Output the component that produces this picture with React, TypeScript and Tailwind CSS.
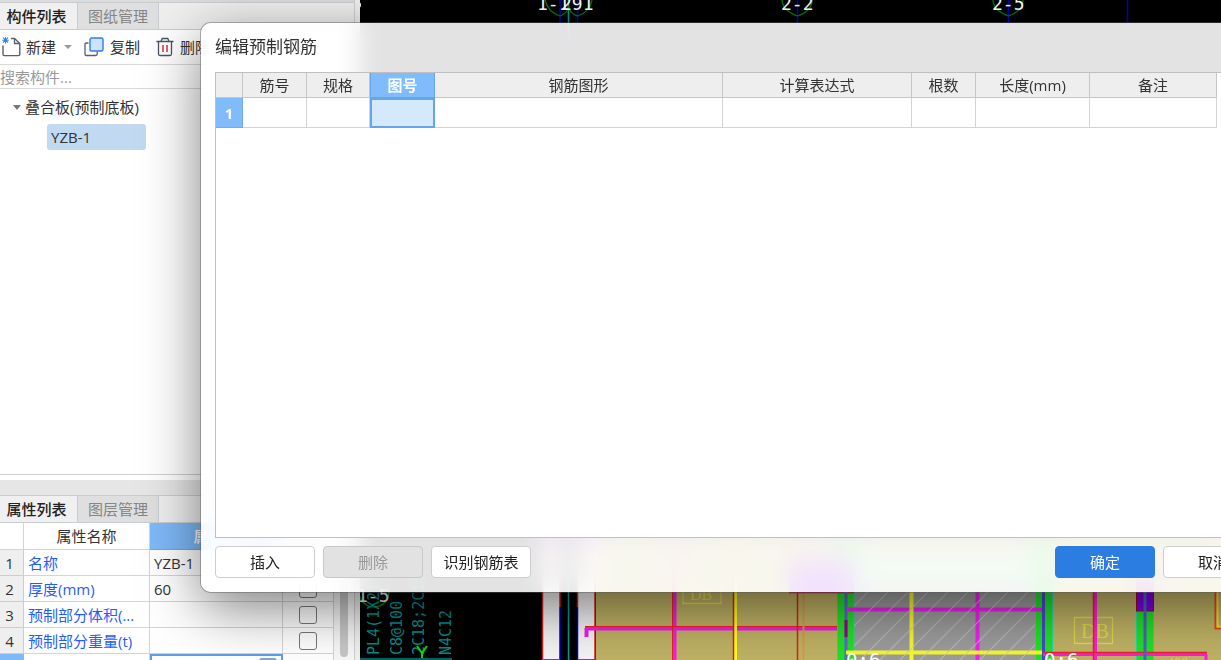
import React from "react";

const columns = [
  { label: "筋号", width: 64 },
  { label: "规格", width: 63 },
  { label: "图号", width: 65, active: true },
  { label: "钢筋图形", width: 288 },
  { label: "计算表达式", width: 189 },
  { label: "根数", width: 64 },
  { label: "长度(mm)", width: 114 },
  { label: "备注", width: 127 },
];

const properties = [
  { name: "名称", value: "YZB-1" },
  { name: "厚度(mm)", value: "60", check: true },
  { name: "预制部分体积(...", value: "", check: true },
  { name: "预制部分重量(t)", value: "", check: true },
];

function NewIcon() {
  return (
    <svg width="20" height="20" viewBox="0 0 20 20" fill="none" aria-hidden="true">
      <path d="M1 8.500v8.800a1.300 1.300 0 0 0 1.300 1.300h14.200a1.300 1.300 0 0 0 1.300-1.300V6.500L12.500 1.500H9" stroke="#565f6e" strokeWidth="1.400" />
      <path d="M12.500 1.500v5h5.300" stroke="#565f6e" strokeWidth="1.300" />
      <path d="M3.500 0v6.400M0.300 3.200h6.400M1 0.700l5 5M6 0.700L1 5.700" stroke="#2f86ea" strokeWidth="1.100" />
    </svg>
  );
}

function CopyIcon() {
  return (
    <svg width="20" height="20" viewBox="0 0 20 20" fill="none" aria-hidden="true">
      <path d="M4.500 6H2.200Q1 6 1 7.200v10Q1 18.500 2.200 18.500h9.600Q13.200 18.500 13.200 17v-2.500" stroke="#565f6e" strokeWidth="1.300" />
      <rect x="6" y="1" width="13" height="13" rx="1.500" fill="#cfe2fb" stroke="#2f7fe6" strokeWidth="1.400" />
    </svg>
  );
}

function TrashIcon() {
  return (
    <svg width="18" height="20" viewBox="0 0 18 20" fill="none" aria-hidden="true">
      <path d="M0.500 4.500h17M5 4.500L6.200 1.500h5.600L13 4.500M2.500 4.500V17q0 1.500 1.500 1.500h10q1.500 0 1.500-1.500V4.500" stroke="#4b5361" strokeWidth="1.300" />
      <path d="M7 8v7M11 8v7" stroke="#d9303e" strokeWidth="1.500" />
    </svg>
  );
}

function Tabs({ active, other }: { active: string; other: string }) {
  return (
    <div role="tablist" className="flex h-7 shrink-0 border-y border-[#c9cdd1] bg-[#efefef] text-[15px] leading-6">
      <button role="tab" aria-selected="true" className="w-[78px] border-r border-[#c9cdd1] bg-[#f0f0f0] pr-1 font-medium text-[#222]">
        {active}
      </button>
      <button role="tab" aria-selected="false" className="w-[81px] border-r border-[#c9cdd1] bg-[#dfdfdf] text-[#858585]">
        {other}
      </button>
    </div>
  );
}

function ComponentPanel() {
  return (
    <section className="flex min-h-0 flex-1 flex-col border-b border-[#cfcfcf] bg-white">
      <div className="h-0.5 shrink-0 bg-[#dcdcdc]" />
      <Tabs active="构件列表" other="图纸管理" />
      <div className="flex h-[35px] shrink-0 items-center border-b border-[#d9d9d9] pl-0.5">
        <button className="flex items-center gap-1 whitespace-nowrap">
          <NewIcon />新建
        </button>
        <button aria-label="新建选项" className="ml-2 border-x-4 border-t-4 border-x-transparent border-t-[#999]" />
        <button className="ml-3 flex items-center gap-1.5 whitespace-nowrap">
          <CopyIcon />复制
        </button>
        <button className="ml-4 flex items-center gap-1.5 whitespace-nowrap">
          <TrashIcon />删除
        </button>
      </div>
      <input
        aria-label="搜索构件"
        placeholder="搜索构件..."
        className="h-6 w-full shrink-0 border-b border-[#d9d9d9] bg-white text-[15px] outline-none placeholder:text-[#999]"
      />
      <ul className="flex flex-col gap-[3px] pt-1">
        <li className="flex h-7 items-center gap-1 pl-[13px]">
          <span className="border-x-4 border-t-[5px] border-x-transparent border-t-[#777]" />
          叠合板(预制底板)
        </li>
        <li className="ml-[47px] w-[99px] rounded-[3px] bg-[#c2d9f2] pl-1 leading-[26px]">YZB-1</li>
      </ul>
    </section>
  );
}

function PropertyPanel() {
  return (
    <section className="h-[165px] shrink-0 overflow-hidden">
      <Tabs active="属性列表" other="图层管理" />
      <div className="flex">
        <table className="w-[334px] table-fixed border-separate border-spacing-0 text-left">
          <colgroup>
            <col className="w-[24px]" />
            <col className="w-[126px]" />
            <col className="w-[133px]" />
            <col className="w-[51px]" />
          </colgroup>
          <thead>
            <tr className="h-[27px] text-center">
              <th className="border-r border-b border-[#d4d4d4] bg-white p-0" />
              <th className="border-r border-b border-[#d4d4d4] bg-white p-0 text-center font-normal">属性名称</th>
              <th className="border-r border-b border-[#68a8ea] bg-[#7fb9f8] p-0 text-center font-medium text-white">属性值</th>
              <th className="border-r border-b border-[#d4d4d4] bg-white p-0 text-center font-normal">附加</th>
            </tr>
          </thead>
          <tbody>
            {properties.map((p, i) => (
              <tr key={p.name} className="h-[26px]">
                <th className="border-r border-b border-[#cdcdcd] bg-[#efefef] p-0 pr-1 text-center font-normal">{i + 1}</th>
                <td className="border-r border-b border-[#d4d4d4] bg-white p-0 pl-1 whitespace-nowrap text-[#1f5cff]">{p.name}</td>
                <td className="border-r border-b border-[#d4d4d4] bg-white p-0 pl-1">{p.value}</td>
                <td className="border-r border-b border-[#d4d4d4] bg-white p-0 text-center">
                  {p.check && (
                    <input
                      type="checkbox"
                      aria-label={p.name}
                      className="mx-auto block size-[18px] appearance-none rounded-[3px] border border-[#777] bg-white"
                    />
                  )}
                </td>
              </tr>
            ))}
            <tr className="h-[26px]">
              <th className="bg-[#7fb9f8] p-0" />
              <td className="border-r border-[#d4d4d4] bg-white p-0" />
              <td className="border-2 border-[#5e9fe3] bg-white p-0 align-top">
                <button aria-label="更多" className="mt-0.5 mr-1 ml-auto block h-5 w-[18px] rounded-[3px] bg-[#7aa6dc]" />
              </td>
              <td className="border-r border-[#d4d4d4] bg-white p-0" />
            </tr>
          </tbody>
        </table>
        <div className="flex-1 bg-[#f7f7f7] px-1.5">
          <div className="h-[134px] rounded-full bg-[#c6c6c6]" />
        </div>
      </div>
    </section>
  );
}

function AxisLabel({ x, children }: { x: number; children: string }) {
  return (
    <text x={x} y="10" fill="#fff" fontFamily="DejaVu Sans Mono, monospace" fontSize="18">
      {children}
    </text>
  );
}

function CadText({ x, y = 655, children }: { x: number; y?: number; children: string }) {
  return (
    <text transform={`translate(${x} ${y}) rotate(-90)`} fill="#008f8f" fontFamily="DejaVu Sans Mono, monospace" fontSize="15">
      {children}
    </text>
  );
}

function Drawing() {
  return (
    <svg className="block h-full w-full" aria-label="结构平面图">
      <defs>
        <pattern id="hatch" width="20" height="20" patternUnits="userSpaceOnUse">
          <path d="M-2 22L22 -2M-2 2L2 -2M18 22L22 18" stroke="#c4c4c4" strokeWidth="1.200" />
        </pattern>
      </defs>
      <g transform="translate(-360 0)">
        <rect x="360" width="2000" height="2000" fill="#000" />
        <g stroke="#0000c8" strokeWidth="1.500">
          <path d="M560 0V60M577.500 0V60M797.500 0V60M1008.500 0V60M1127.500 0V60" />
        </g>
        <path d="M568.500 0V60" stroke="#009c9c" strokeWidth="1.500" />
        <g fill="none" stroke="#007c00" strokeWidth="1.300">
          <path d="M545 0Q548 12 560 16Q568 13 568.500 6Q570 14 577.500 16Q590 12 592 0" />
          <path d="M782 0Q783 11 797.500 16Q812 11 812 0M993 0Q994 11 1008.500 16Q1023 11 1023 0" />
        </g>
        <AxisLabel x={537}>1-1</AxisLabel>
        <AxisLabel x={561}>291</AxisLabel>
        <AxisLabel x={781}>2-2</AxisLabel>
        <AxisLabel x={992}>2-5</AxisLabel>
        <circle cx="358" cy="5" r="3" fill="#fff" />

        <circle cx="374" cy="592" r="15" fill="none" stroke="#007c00" strokeWidth="1.500" />
        <text x="357" y="602" fill="#eee" fontFamily="DejaVu Sans Mono, monospace" fontSize="18">1-5</text>
        <CadText x={379}>PL4(1X2)</CadText>
        <CadText x={402}>C8@100</CadText>
        <CadText x={424}>2C18;2C18</CadText>
        <CadText x={451}>N4C12</CadText>
        <path d="M417 646l5 7 5-7M422 653v10" stroke="#00e000" strokeWidth="2" fill="none" />
        <path d="M360 659H452" stroke="#006464" strokeWidth="2" />

        <rect x="542" y="545" width="18" height="300" fill="#f4f4f4" />
        <rect x="578" y="545" width="17" height="300" fill="#f4f4f4" />
        <path d="M542 545h18v-25h-18zM578 545h17v-25h-17z" fill="#c040ff" />
        <path d="M542.500 545V680M560 545V607M577.500 545V607M595 545V680" stroke="#d02020" strokeWidth="1.500" />
        <path d="M560 607V680M577.500 607V680" stroke="#0000c8" strokeWidth="1.500" />
        <path d="M568.500 520V680" stroke="#009c9c" strokeWidth="1.500" />
        <path d="M542 660H560M578 660H595" stroke="#8a30e8" strokeWidth="2" />

        <rect x="596" y="530" width="1400" height="400" fill="#bfb264" />
        <rect x="854" y="582" width="181" height="300" fill="#9c9c9c" />
        <rect x="854" y="552" width="181" height="30" fill="#8fe0a0" />
        <path d="M585 628.500H846M586.500 628V637M674.500 530V680" stroke="#f01fe8" strokeWidth="4" fill="none" />
        <path d="M585 626.500H848M672.500 530V680" stroke="#f02020" strokeWidth="1" />
        <path d="M735.500 530V680" stroke="#ffff28" strokeWidth="3" />
        <path d="M733.500 530V680M797.500 530V680" stroke="#e02010" strokeWidth="1.500" />
        <path d="M803.500 530V680" stroke="#d39a50" strokeWidth="2" />
        <g fill="none" stroke="#ded84c" strokeWidth="1.300">
          <path d="M683 580h38v23.500h-38zM1074.500 617.500h38v26h-38z" />
        </g>
        <g fill="#ded84c" fontFamily="Liberation Serif, serif" fontSize="20">
          <text x="690" y="600" fontSize="16">DB</text>
          <text x="1081" y="638">DB</text>
          <text x="1167" y="668" fontSize="14">400</text>
        </g>

        <g fill="#22df28" stroke="#20dca0" strokeWidth="1">
          <rect x="837.500" y="535" width="16.500" height="180" />
          <rect x="1035.500" y="535" width="17" height="180" />
          <rect x="1136.500" y="610" width="17" height="100" />
        </g>
        <rect x="789" y="560" width="65" height="32" fill="#8800e8" />
        <path d="M789 592.500H854" stroke="#d01040" strokeWidth="1.500" />
        <path d="M846 592V680" stroke="#6660d8" strokeWidth="3" />
        <path d="M847.500 609.500H1042M977.500 592V680" stroke="#f020f0" strokeWidth="4" />
        <path d="M911.500 592V680" stroke="#f8f82a" strokeWidth="4" />
        <path d="M846 652.500H1042" stroke="#f8f82a" strokeWidth="4" />
        <path d="M846 620V637" stroke="#a0008c" strokeWidth="3" />
        <path d="M1043.500 592V680" stroke="#4a48d0" strokeWidth="3" />
        <rect x="854" y="592" width="181" height="300" fill="url(#hatch)" opacity="0.7" />
        <path d="M1095.500 592V680M1043 654.500H1207M1206 654V670" stroke="#f81fd8" strokeWidth="3" />
        <path d="M1093.500 592V680M1043 652.500H1207" stroke="#f02020" strokeWidth="1.500" />
        <rect x="1136.500" y="575" width="17" height="36" fill="#7d00df" stroke="#a00030" />
        <path d="M1145 592V680" stroke="#5060c0" strokeWidth="3" />
        <path d="M1221 628.500H1215.500V592" stroke="#f04020" strokeWidth="2" fill="none" />
        <path d="M1221 626.500H1217.500V592" stroke="#f0e020" strokeWidth="2" fill="none" />
        <g fill="#fff" fontFamily="DejaVu Sans Mono, monospace" fontSize="19">
          <text x="846" y="667">0:6</text>
          <text x="1044" y="667">0:6</text>
        </g>
      </g>
    </svg>
  );
}

const button = "h-8 w-[100px] shrink-0 rounded-[4px] border text-center text-[15px] leading-[30px] whitespace-nowrap";

function RebarDialog() {
  return (
    <div
      role="dialog"
      aria-labelledby="dialog-title"
      className="absolute top-[23px] bottom-[68px] left-[201px] flex w-[1076px] flex-col rounded-[10px] bg-white/89 px-3.5 pb-3.5 shadow-[0_0_0_1px_rgba(90,90,90,0.45),0_16px_56px_rgba(0,0,0,0.5)] backdrop-blur-md"
    >
      <h1 id="dialog-title" className="h-[49px] shrink-0 text-[17px] leading-[48px] text-[#333]">编辑预制钢筋</h1>
      <div className="min-h-0 flex-1 border border-[#bfbfbf] bg-white">
        <table className="w-[1001px] table-fixed border-separate border-spacing-0 text-center">
          <colgroup>
            <col className="w-[27px]" />
            {columns.map((c) => (
              <col key={c.label} style={{ width: c.width }} />
            ))}
          </colgroup>
          <thead>
            <tr className="h-[25px]">
              <th className="border-r border-b border-[#c6c6c6] bg-[#eee] p-0" />
              {columns.map((c) => (
                <th
                  key={c.label}
                  className={
                    c.active
                      ? "border-x border-b border-[#65a5e8] bg-[#80bbfb] p-0 font-bold text-white"
                      : "border-r border-b border-[#c6c6c6] bg-[#eee] p-0 font-normal text-[#333]"
                  }
                >
                  {c.label}
                </th>
              ))}
            </tr>
          </thead>
          <tbody>
            <tr className="h-[30px]">
              <th className="border-r border-b border-[#70abea] bg-[#80bbfb] p-0 font-bold text-white">1</th>
              {columns.map((c) => (
                <td
                  key={c.label}
                  className={c.active ? "border-2 border-[#65a5e8] bg-[#d5e9fe] p-0" : "border-r border-b border-[#d3d3d3] bg-white p-0"}
                />
              ))}
            </tr>
          </tbody>
        </table>
      </div>
      <div className="flex shrink-0 gap-2 pt-2">
        <button className={`${button} border-[#cdcdcd] bg-white text-[#222]`}>插入</button>
        <button disabled className={`${button} border-[#c8c8c8] bg-[#e2e2e2] text-[#999]`}>删除</button>
        <button className={`${button} border-[#cdcdcd] bg-white text-[#222]`}>识别钢筋表</button>
        <span className="flex-1" />
        <button className={`${button} border-[#2b7de1] bg-[#2b7de1] text-white`}>确定</button>
        <button className={`${button} border-[#cdcdcd] bg-white text-[#222]`}>取消</button>
      </div>
    </div>
  );
}

export default function App() {
  return (
    <main className="relative flex h-screen w-full overflow-hidden bg-[#f4f4f4] font-['Open_Sans','Noto_Sans_CJK_SC',sans-serif] text-[15px] leading-5 text-[#333]">
      <aside className="flex w-[355px] shrink-0 flex-col border-r border-[#cfcfcf]">
        <ComponentPanel />
        <div className="h-5 shrink-0 border-t-[5px] border-white bg-[#e6e6e6]" />
        <PropertyPanel />
      </aside>
      <div className="w-[5px] shrink-0 bg-[#f0f0f0]" />
      <div className="min-w-0 flex-1">
        <Drawing />
      </div>
      <RebarDialog />
    </main>
  );
}
